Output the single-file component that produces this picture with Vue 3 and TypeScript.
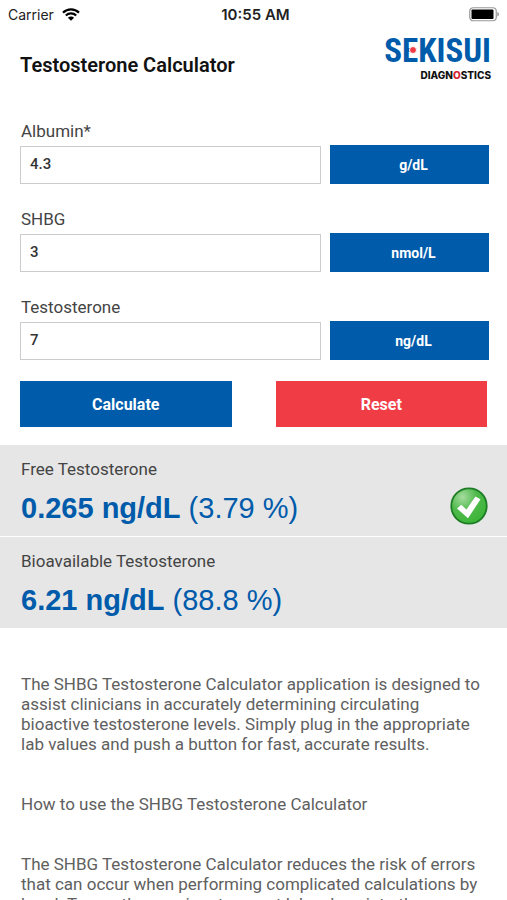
<script setup lang="ts">
import { ref } from 'vue'

interface Field {
  id: string
  label: string
  value: string
  unit: string
}

interface Result {
  label: string
  amount: string
  percent: string
  ok: boolean
}

const fields = ref<Field[]>([
  { id: 'albumin', label: 'Albumin*', value: '4.3', unit: 'g/dL' },
  { id: 'shbg', label: 'SHBG', value: '3', unit: 'nmol/L' },
  { id: 'testosterone', label: 'Testosterone', value: '7', unit: 'ng/dL' },
])

const results = ref<Result[]>([
  { label: 'Free Testosterone', amount: '0.265 ng/dL', percent: '(3.79 %)', ok: true },
  { label: 'Bioavailable Testosterone', amount: '6.21 ng/dL', percent: '(88.8 %)', ok: false },
])

function reset(): void {
  fields.value.forEach((field) => {
    field.value = ''
  })
}
</script>

<template>
  <div class="app">
    <div class="status">
      <div class="carrier">
        <span>Carrier</span>
        <svg class="wifi" viewBox="0 0 18 13" aria-hidden="true">
          <path d="M1 4.6a11.5 11.5 0 0 1 16 0M3.8 7.5a7.6 7.6 0 0 1 10.4 0" />
          <path class="wedge" d="M9 12.8 5.9 9.7a4.4 4.4 0 0 1 6.2 0z" />
        </svg>
      </div>
      <span class="time">10:55 AM</span>
      <svg class="battery" viewBox="0 0 30 15" aria-hidden="true">
        <rect class="shell" x="0.75" y="0.75" width="26.5" height="13" rx="3.5" />
        <rect x="2.5" y="2.5" width="22" height="9.5" rx="1" />
        <path class="cap" d="M28.3 5q1.7 0.6 1.7 2.3t-1.7 2.3z" />
      </svg>
    </div>

    <header class="header">
      <h1>Testosterone Calculator</h1>
      <div class="logo">
        <span class="brand">S<span class="e">E<i class="dot"></i></span>KISUI</span>
        <span class="division">DIAGN<span class="ring">O</span>STICS</span>
      </div>
    </header>

    <form class="form" @submit.prevent>
      <div v-for="field in fields" :key="field.id" class="field">
        <label :for="field.id">{{ field.label }}</label>
        <div class="row">
          <input :id="field.id" v-model="field.value" type="text" inputmode="decimal" />
          <button type="button" class="unit">{{ field.unit }}</button>
        </div>
      </div>
      <div class="actions">
        <button type="submit" class="calculate">Calculate</button>
        <button type="button" class="reset" @click="reset">Reset</button>
      </div>
    </form>

    <section class="results">
      <div v-for="result in results" :key="result.label" class="result">
        <div>
          <h2>{{ result.label }}</h2>
          <p class="value"><strong>{{ result.amount }}</strong> {{ result.percent }}</p>
        </div>
        <svg v-if="result.ok" class="check" viewBox="0 0 38 38" aria-hidden="true">
          <defs>
            <radialGradient id="ball" cx="0.32" cy="0.25" r="0.8">
              <stop offset="0" stop-color="#a5dc9f" />
              <stop offset="0.5" stop-color="#4fb94c" />
              <stop offset="1" stop-color="#3bb536" />
            </radialGradient>
          </defs>
          <circle cx="19" cy="19" r="17.7" fill="url(#ball)" stroke="#1d7d25" stroke-width="1.8" />
          <path d="M7 21.5 11.3 17.8 16.4 22.4 25.5 9.5 30.5 12.3 18 31.3z" fill="#fff" />
        </svg>
      </div>
    </section>

    <main class="about">
      <p>The SHBG Testosterone Calculator application is designed to assist clinicians in accurately determining circulating bioactive testosterone levels. Simply plug in the appropriate lab values and push a button for fast, accurate results.</p>
      <p>How to use the SHBG Testosterone Calculator</p>
      <p>The SHBG Testosterone Calculator reduces the risk of errors that can occur when performing complicated calculations by hand. To use the app, input current lab values into the</p>
    </main>
  </div>
</template>

<style>
body {
  margin: 0;
  background: #fff;
}
html {
  height: 100%;
  overflow: hidden;
}
body,
#app {
  height: 100%;
}
</style>

<style scoped>
.app {
  height: 100%;
  overflow: hidden;
  font-family: Roboto, "Liberation Sans", sans-serif;
  color: #444;
}
.status {
  display: grid;
  grid-template-columns: 1fr auto 1fr;
  align-items: center;
  height: 28px;
  padding: 0 8px;
  font: 14px Inter, sans-serif;
  color: #222;
}
.carrier {
  display: flex;
  align-items: center;
  gap: 8px;
}
.wifi {
  width: 18px;
  height: 13px;
  fill: none;
  stroke: #000;
  stroke-width: 2.2;
}
.wedge {
  fill: #000;
  stroke: none;
}
.time {
  padding-left: 4px;
  font-size: 15px;
  font-weight: 600;
}
.battery {
  justify-self: end;
  width: 30px;
  height: 15px;
}
.shell {
  fill: none;
  stroke: #999;
  stroke-width: 1.2;
}
.cap {
  fill: #999;
}
.header {
  display: flex;
  justify-content: space-between;
  height: 93px;
  padding: 0 16px 0 20px;
}
h1 {
  margin: 24px 0 0;
  font-size: 20px;
  line-height: 26px;
  font-weight: 600;
  color: #111;
}
.logo {
  display: flex;
  flex-direction: column;
  align-items: flex-end;
  padding-top: 5px;
}
.brand {
  font: 700 33px/36px "Liberation Sans Narrow", "Roboto Condensed", Roboto, sans-serif;
  color: #005bab;
}
.e {
  position: relative;
}
.dot {
  position: absolute;
  top: 15px;
  left: 7px;
  width: 6px;
  height: 6px;
  border: 1px solid #fff;
  border-radius: 50%;
  background: #ee3b44;
}
.division {
  font: 800 10px/12px Inter, sans-serif;
  color: #111;
}
.ring {
  color: #d3202c;
}
.form {
  display: flex;
  flex-direction: column;
  padding: 0 18px 18px 20px;
}
.field {
  height: 88px;
}
label {
  display: block;
  padding-left: 1px;
  font-size: 17px;
  line-height: 20px;
}
.row {
  display: grid;
  grid-template-columns: 301fr 159fr;
  gap: 9px;
  align-items: center;
  margin-top: 4px;
}
input {
  box-sizing: border-box;
  width: 100%;
  height: 38px;
  padding: 0 9px 2px;
  border: 1px solid #ccc;
  border-radius: 0;
  font: 500 15px Roboto, sans-serif;
  color: #333;
}
button {
  border: 0;
  border-radius: 0;
  color: #fff;
  background: #005bab;
  font: 700 16px Roboto, sans-serif;
}
.unit {
  height: 39px;
  padding: 0 0 0 8px;
  font-size: 14px;
}
.actions {
  display: grid;
  grid-template-columns: 1fr 1fr;
  gap: 44px;
  margin-top: -4px;
  padding-right: 2px;
}
.actions button {
  height: 46px;
}
.actions .reset {
  background: #f03c44;
}
.result {
  display: flex;
  justify-content: space-between;
  align-items: center;
  box-sizing: border-box;
  height: 91px;
  padding: 4px 19px 0 21px;
  background: #e6e6e6;
}
.result + .result {
  margin-top: 1px;
}
h2 {
  margin: 0;
  font-size: 17px;
  line-height: 20px;
  font-weight: 400;
}
.value {
  margin: 11px 0 0;
  font: 29px/36px "Liberation Sans", sans-serif;
  color: #005bab;
}
.check {
  width: 38px;
  height: 38px;
  margin-top: 26px;
}
.about {
  padding: 46px 20px 0 21px;
  font-size: 17px;
  line-height: 20px;
  color: #606060;
}
.about p {
  margin: 0 0 40px;
}
</style>
